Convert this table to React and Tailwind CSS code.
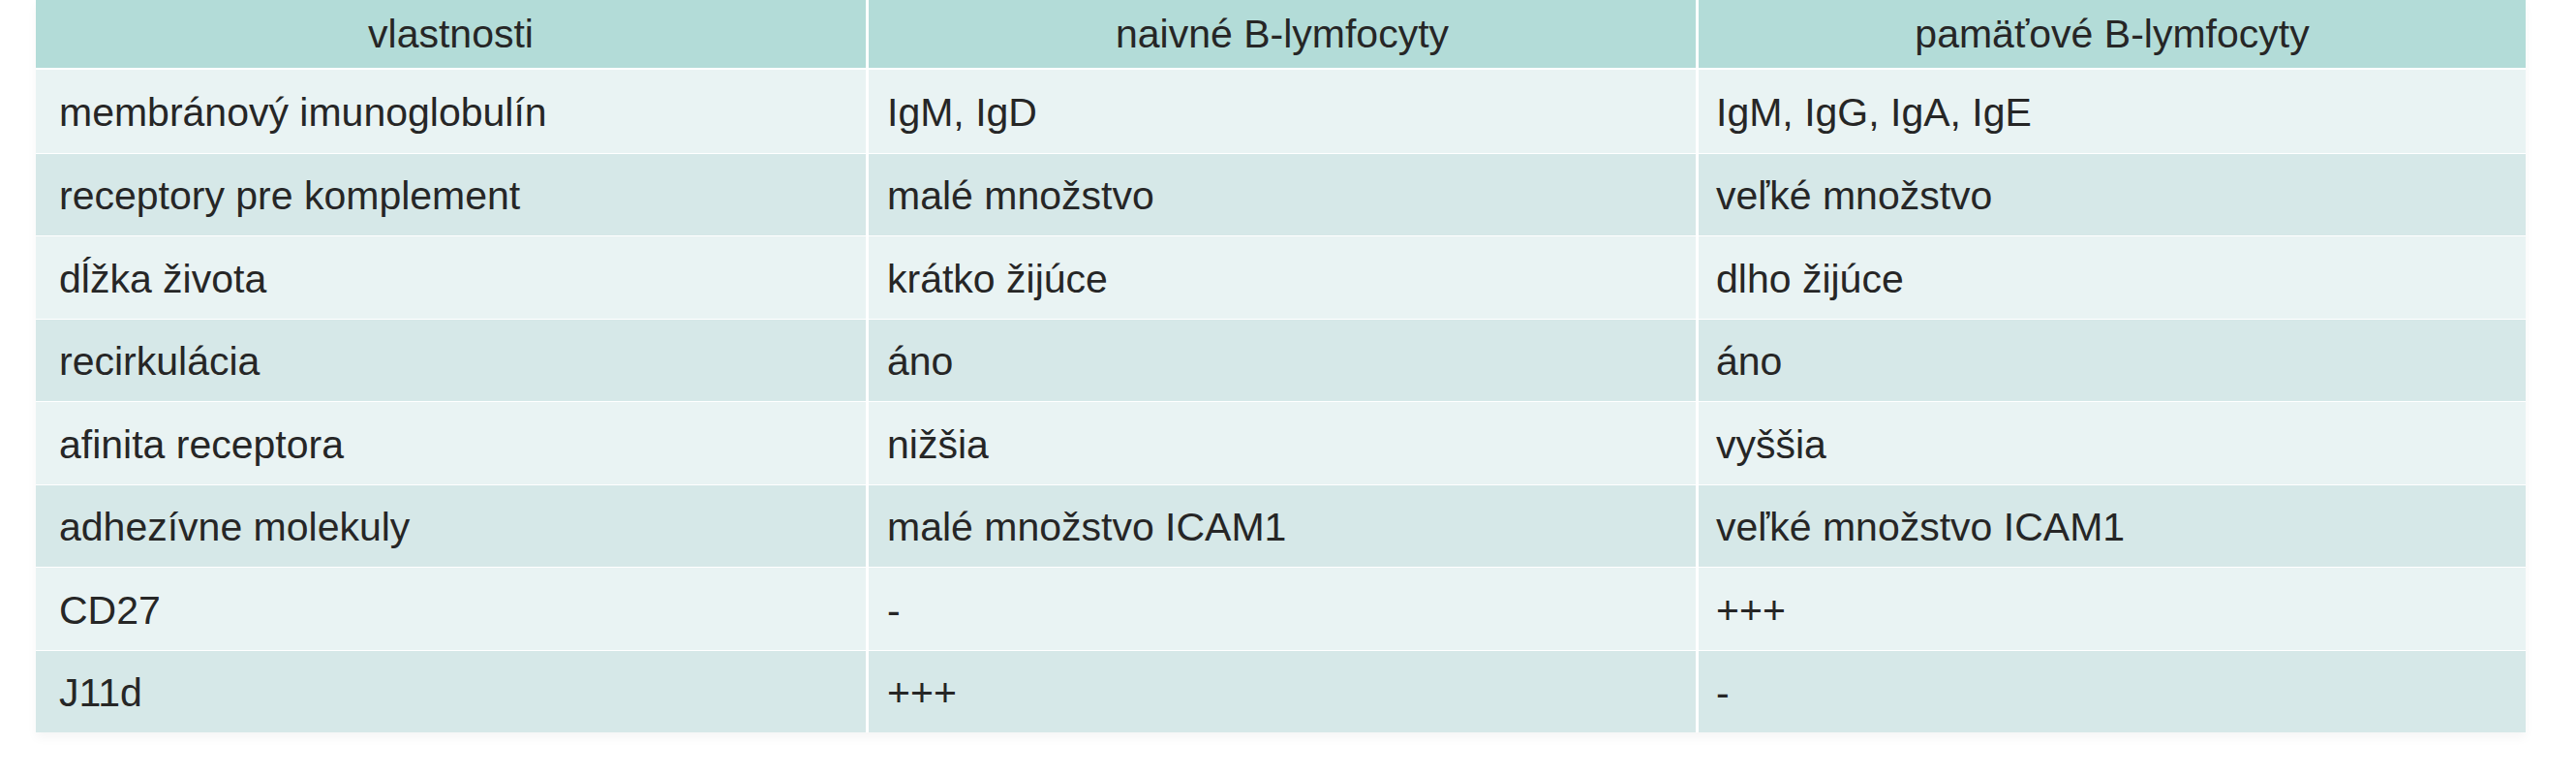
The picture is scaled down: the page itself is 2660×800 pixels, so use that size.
import React from 'react';

const rows = [
  ['membránový imunoglobulín', 'IgM, IgD', 'IgM, IgG, IgA, IgE'],
  ['receptory pre komplement', 'malé množstvo', 'veľké množstvo'],
  ['dĺžka života', 'krátko žijúce', 'dlho žijúce'],
  ['recirkulácia', 'áno', 'áno'],
  ['afinita receptora', 'nižšia', 'vyššia'],
  ['adhezívne molekuly', 'malé množstvo ICAM1', 'veľké množstvo ICAM1'],
  ['CD27', '-', '+++'],
  ['J11d', '+++', '-'],
];

export default function App() {
  return (
    <div className="w-[2660px] h-[800px] bg-white pl-[37px] font-['Liberation_Sans',Arial,sans-serif] text-[41px] text-[#262626]">
      <div className="w-[2571px] shadow-[0_6px_10px_rgba(0,0,0,0.04)]">
        {/* header */}
        <div className="grid grid-cols-3 h-[72px] bg-[#b3dcd8] border-b-[2px] border-white">
          <div className="flex items-center justify-center pt-[2px]">vlastnosti</div>
          <div className="flex items-center justify-center pt-[2px] border-l-[3px] border-white">naivné B-lymfocyty</div>
          <div className="flex items-center justify-center pt-[2px] border-l-[3px] border-white">pamäťové B-lymfocyty</div>
        </div>

        {rows.map((row, i) => (
          <div
            key={i}
            className={`grid grid-cols-3 h-[85.5px] ${i % 2 === 0 ? 'bg-[#e9f3f3]' : 'bg-[#d6e8e8]'} ${i > 0 ? 'border-t border-white' : ''}`}
          >
            <div className="flex items-center pl-[24px] pt-[4px]">{row[0]}</div>
            <div className="flex items-center pl-[19px] pt-[4px] border-l-[3px] border-white">{row[1]}</div>
            <div className="flex items-center pl-[18px] pt-[4px] border-l-[3px] border-white">{row[2]}</div>
          </div>
        ))}
      </div>
    </div>
  );
}
